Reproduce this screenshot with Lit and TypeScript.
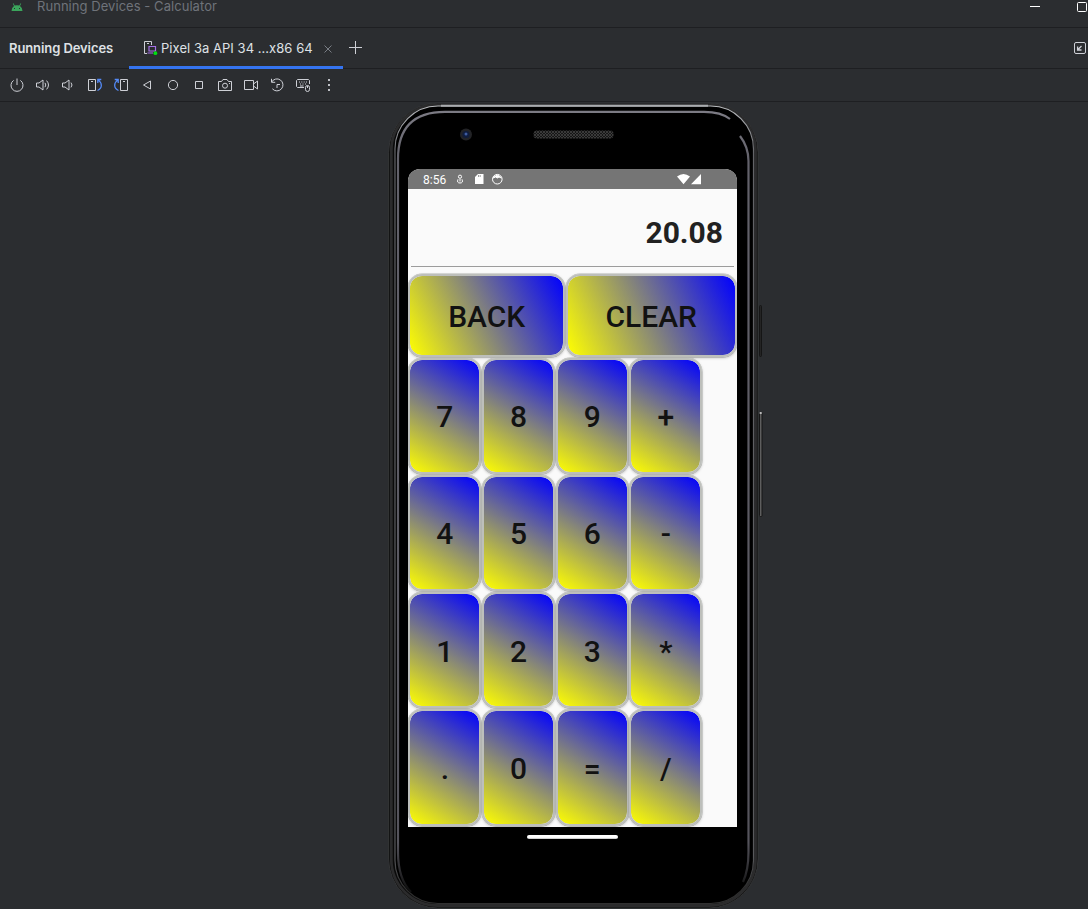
import { LitElement, html, css, svg } from "lit";
import { customElement, property, state } from "lit/decorators.js";

const toolIcons = [
  // power
  svg`<path d="M4.6 3.4A6 6 0 1 0 11.4 3.4M8 1.5V8"/>`,
  // volume up
  svg`<path d="M1.5 6H4L8 3V13L4 10H1.5ZM10 5.8Q11.6 8 10 10.2M11.6 3.6Q15.4 8 11.6 12.4"/>`,
  // volume down
  svg`<path d="M1.5 6H4L8 3V13L4 10H1.5ZM10 5.6Q12 8 10 10.4"/>`,
  // rotate left
  svg`<path d="M1.5 2.5H8.5V13.5H1.5ZM4 4.5H6"/><path class="blue" d="M10.5 13.5C15.5 11.5 15.5 6 11 2.8M14.3 2.5H10.8V6"/>`,
  // rotate right
  svg`<path d="M7.5 2.5H14.5V13.5H7.5ZM10 4.5H12"/><path class="blue" d="M5.5 13.5C.5 11.5 .5 6 5 2.8M1.7 2.5H5.2V6"/>`,
  // back
  svg`<path d="M11.5 4V12L4.5 8Z"/>`,
  // home
  svg`<circle cx="8" cy="8" r="4.6"/>`,
  // overview
  svg`<path d="M4.5 4.5H11.5V11.5H4.5Z"/>`,
  // camera
  svg`<path d="M1.5 4.5H4.5L6 2.5H10L11.5 4.5H14.5V13.5H1.5Z"/><circle cx="8" cy="8.7" r="2.5"/><path d="M12 6.5H13"/>`,
  // video
  svg`<path d="M1.5 3.5H10.5V12.5H1.5ZM10.5 7L14.5 4V12L10.5 9"/>`,
  // snapshots
  svg`<path d="M2.7 5A6 6 0 1 1 3.4 11.8M2.5 1.8V5.3H6.2M8 11V7.5H11"/>`,
  // hardware input
  svg`<path d="M9 10.5H2.5L1.5 9.5V3.5L2.5 2.5H13.5L14.5 3.5V7"/><path d="M4 5H5M6.3 5H7.3M8.7 5H9.7M11 5H12M5 7H6M7.5 7H8.5M10 7H11M5 9H8.5"/><rect x="10.5" y="8.5" width="4" height="6" rx="2"/><path d="M12.5 9V11"/>`,
  // more
  svg`<path class="solid" d="M7.1 2h1.8v2H7.1zM7.1 7h1.8v2H7.1zM7.1 12h1.8v2H7.1z"/>`,
];

@customElement("ide-header")
class IdeHeader extends LitElement {
  static styles = css`
    :host { display: block; color: #dfe1e5; font: 13px/16px Inter, sans-serif; }
    svg { display: block; fill: none; }
    .title { box-sizing: border-box; display: flex; align-items: flex-start; border-bottom: 1px solid #1e1f22; height: 28px; color: #6f737a; }
    .robot { margin: 3px 0 0 11px; }
    .name { margin: 0 0 0 14px; line-height: 12px; letter-spacing: 0.05px; }
    .win { margin-left: auto; display: flex; height: 14px; }
    .tabs { height: 41px; box-sizing: border-box; display: flex; align-items: stretch; border-bottom: 1px solid #1e1f22; }
    .heading { width: 129px; box-sizing: border-box; padding: 12px 0 0 9px; font-weight: 600; white-space: nowrap; letter-spacing: -0.09px; }
    .tab { width: 214px; box-sizing: border-box; height: 41px; padding: 12px 0 0 14px; display: flex; align-items: flex-start; white-space: nowrap;
      background: linear-gradient(#3574f0, #3574f0) 0 38px / 100% 3px no-repeat; }
    .label { margin-left: 2px; width: 153px; letter-spacing: 0.04px; }
    .close { margin: 4px 0 0 9px; }
    .plus { margin: 13px 0 0 6px; }
    .dock { margin: 14px 2px 0 auto; }
    .tools { height: 33px; box-sizing: border-box; border-bottom: 1px solid #1e1f22; display: flex; align-items: center; padding-left: 4px; }
    .tool { width: 26px; display: grid; place-items: center; stroke: #ced0d6; }
    .blue { stroke: #548af7; stroke-width: 1.3; }
    .solid { fill: #ced0d6; stroke: none; }
  `;
  render() {
    return html`
      <div class="title">
        <svg class="robot" width="12" height="8" viewBox="0 0 12 8"><path fill="#3ba55c" d="M.5 8Q.7 4.5 3 3L1.8 .6L2.4 .3L3.7 2.6Q6 1.8 8.3 2.6L9.6 .3L10.2 .6L9 3Q11.3 4.5 11.5 8Z"/><path fill="#2b2d30" d="M3 5h1v1H3zM8 5h1v1H8z"/></svg>
        <span class="name">Running Devices - Calculator</span>
        <svg class="win" width="58" height="14" viewBox="0 0 58 14" stroke="#fff"><path d="M0 6.5H10"/><rect x="47.5" y="2.5" width="9" height="9" rx="1"/></svg>
      </div>
      <div class="tabs">
        <div class="heading">Running Devices</div>
        <div class="tab">
          <svg width="16" height="16" viewBox="0 0 16 16"><path stroke="#ced0d6" d="M4 13.5H1.5V1.5H8.5V5M4 3.5H6"/><path stroke="#a571e6" stroke-width="1.2" d="M6 6.5H12.5V11H6ZM4.5 13H10"/><circle cx="12.4" cy="13.2" r="1.9" fill="#00e010"/></svg>
          <span class="label">Pixel 3a API 34 ...x86 64</span>
          <svg class="close" width="10" height="10" viewBox="0 0 10 10" stroke="#7a7e85"><path d="M1.5 1.5L8.5 8.5M8.5 1.5L1.5 8.5"/></svg>
        </div>
        <svg class="plus" width="14" height="14" viewBox="0 0 14 14" stroke="#ced0d6"><path d="M0 6.5H13M6.5 0V13"/></svg>
        <svg class="dock" width="13" height="13" viewBox="0 0 13 13" stroke="#ced0d6"><rect x="1.5" y=".5" width="11" height="11" rx="1.5"/><path stroke-width="1.3" d="M8.5 4L5 7.5M4.6 4.5V8H8.5"/></svg>
      </div>
      <div class="tools">
        ${toolIcons.map((i) => html`<span class="tool"><svg width="16" height="16" viewBox="0 0 16 16">${i}</svg></span>`)}
      </div>`;
  }
}

@customElement("calc-key")
class CalcKey extends LitElement {
  @property() label = "";
  static styles = css`
    :host { display: grid; padding: 0 0.3px; box-sizing: border-box; }
    .key { margin: 0; padding: 3px 0 0; border: 2px solid #bdbfbb; border-radius: 14px; display: grid; place-items: center; color: #121212;
      background: linear-gradient(var(--angle), #ffff00, #0000ff) padding-box; box-shadow: 0 1px 3px rgba(0,0,0,.25), 0 0 0 .5px #bdbfbb;
      font: 500 30px/36px Roboto, sans-serif; }
  `;
  render() {
    return html`<button class="key">${this.label}</button>`;
  }
}

@customElement("calc-screen")
class CalcScreen extends LitElement {
  @state() value = "20.08";
  static styles = css`
    :host { display: flex; flex-direction: column; width: 329px; height: 658px; background: #fafafa; border-radius: 12px 12px 0 0; overflow: hidden; font-family: Roboto, sans-serif; }
    .status { height: 20px; flex: none; background: #757575; color: #fff; display: flex; font-size: 12px; line-height: 22px; }
    .time { margin-left: 15px; width: 33px; }
    .status svg { display: block; }
    .net { margin-left: auto; margin-right: 35px; }
    .display { height: 78px; flex: none; box-sizing: border-box; margin: 0 3px; border-bottom: 1px solid #9c9c9c; padding: 25.5px 11px 0 0; text-align: right; font-weight: 700; font-size: 30px; line-height: 36px; color: #212121; }
    .top { margin-top: 6.6px; height: 83.6px; flex: none; display: grid; grid-template-columns: 157.5px 171.5px; }
    .pad { display: grid; grid-template-columns: repeat(4, 73.7px); grid-auto-rows: 117.2px; }
    .key { --angle: 31.5deg; margin: 0.4px 0; }
    .back { --angle: 62.7deg; }
    .clear { --angle: 64.6deg; }
  `;
  render() {
    return html`
      <div class="status">
        <span class="time">8:56</span>
        <svg width="48" height="20" viewBox="0 0 48 20" fill="none" stroke="#fff"><circle cx="4" cy="7.7" r="1.6"/><path d="M2 10.3Q.5 14 4 14Q7.5 14 6 10.3M4 10V12.5"/><path fill="#fff" stroke="none" d="M22 5H27.5V15H19V8Z"/><path stroke="#757575" stroke-width=".7" d="M22.5 6V8M24.2 6V8"/><circle cx="41.3" cy="10.2" r="4.8"/><path fill="#fff" d="M37.2 9Q41.3 3.5 45.4 9L43 8L41.3 9L39.5 8Z"/></svg>
        <svg class="net" width="25" height="20" viewBox="0 0 25 20" fill="#fff"><path d="M0 7.5Q6.5 2.5 13 7.5L6.5 15.3ZM14 15.3L24 5V15.3Z"/></svg>
      </div>
      <div class="display">${this.value}</div>
      <div class="top"><calc-key class="back" label="BACK"></calc-key><calc-key class="clear" label="CLEAR"></calc-key></div>
      <div class="pad">${[..."789+456-123*.0=/"].map((k) => html`<calc-key class="key" label=${k}></calc-key>`)}</div>`;
  }
}

@customElement("app-root")
class AppRoot extends LitElement {
  static styles = css`
    :host { display: flex; flex-direction: column; width: 1088px; height: 909px; overflow: hidden; background: #2b2d30; }
    .stage { flex: 1; min-height: 0; display: flex; padding-left: 388px; }
    .phone { position: relative; width: 376px; height: 807px; display: flex; flex-direction: column; }
    .frame { position: absolute; inset: 0; fill: none; }
    .screen { position: relative; margin: 67px 0 0 20px; }
    .pill { position: relative; margin: 8px 0 0 139px; width: 91px; height: 4px; border-radius: 2px; background: linear-gradient(#fff 60%, #bbb); }
  `;
  render() {
    return html`
      <ide-header></ide-header>
      <div class="stage">
        <div class="phone">
          <svg class="frame" width="376" height="807" viewBox="0 0 376 807">
            <defs>
              <linearGradient id="shine" x1="0" y1="0" x2="0" y2="1"><stop offset="0" stop-color="#b9bbbe"/><stop offset=".02" stop-color="#a0a2a6"/><stop offset=".06" stop-color="#626367"/><stop offset=".94" stop-color="#58595c"/><stop offset=".98" stop-color="#303030"/></linearGradient>
              <linearGradient id="inner" gradientUnits="userSpaceOnUse" x1="0" y1="9" x2="0" y2="795"><stop offset="0" stop-color="#7c7b84"/><stop offset=".06" stop-color="#63626b"/><stop offset=".93" stop-color="#55545c"/><stop offset=".99" stop-color="#111"/></linearGradient>
              <pattern id="mesh" width="3" height="3" patternUnits="userSpaceOnUse"><rect width="3" height="3" fill="#161616"/><path d="M0 0L3 3M3 0L0 3" stroke="#484848" stroke-width=".7"/></pattern>
            </defs>
            <rect x="371.5" y="203.5" width="2" height="51" rx="1" fill="#242424" stroke="#151515"/>
            <rect x="371.5" y="310.5" width="2.5" height="104" rx="1" fill="#5e5e5e" stroke="#161616"/>
            <path d="M372.7 310V312" stroke="#bbb" stroke-width="2"/>
            <rect x=".7" y="1.2" width="369.3" height="804.8" rx="49" fill="#0b0b0b" stroke="#3b3c3e" stroke-width=".8"/>
            <rect x="3.3" y="2.8" width="364.2" height="800.7" rx="46" stroke="#2b2b2c" stroke-width="2.8"/>
            <rect x="7" y="4" width="358.5" height="797.5" rx="43" fill="#000" stroke="url(#shine)" stroke-width="1.2"/>
            <path d="M53 3.8H320" stroke="#a9abae" stroke-width="2"/>
            <path d="M23 790Q10 777 10 750V57Q10 9.8 57 9.8H316Q333 9.8 342 17M352 34Q360.5 45 360.5 59V750Q360.5 768 355 780" stroke="url(#inner)" stroke-width="2.2"/>
            <circle cx="78" cy="32.5" r="6" fill="#222326"/><circle cx="78" cy="32.5" r="3.6" fill="#101d3d"/><circle cx="78" cy="32" r="1.5" fill="#3f5ca0"/>
            <rect x="145.5" y="28.5" width="80" height="8" rx="3.5" fill="url(#mesh)"/>
          </svg>
          <calc-screen class="screen"></calc-screen>
          <div class="pill"></div>
        </div>
      </div>`;
  }
}
